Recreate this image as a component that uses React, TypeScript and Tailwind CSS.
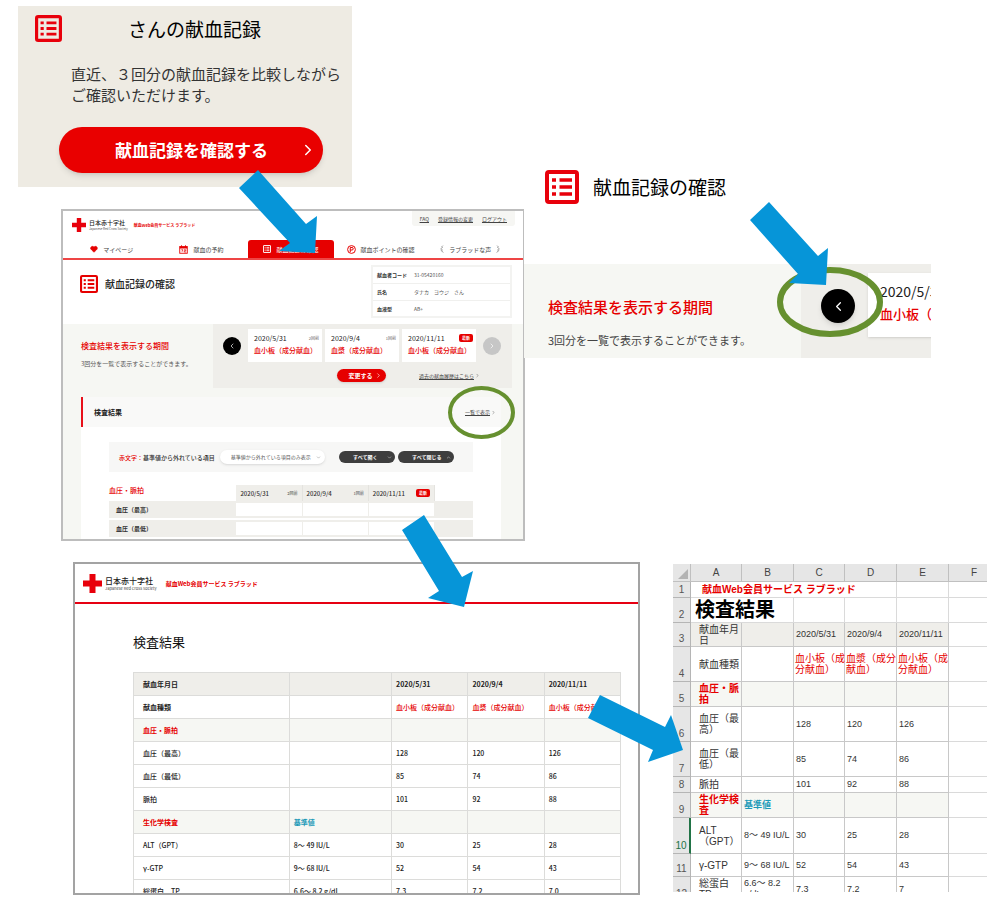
import type { ReactNode } from 'react';
import clsx from 'clsx';
import { ChevronDown, ChevronLeft, ChevronRight, ChevronUp, Heart } from 'lucide-react';

const donations = [
  { date: '2020/5/31', type: '血小板（成分献血）', label: '2回前' },
  { date: '2020/9/4', type: '血漿（成分献血）', label: '1回前' },
  { date: '2020/11/11', type: '血小板（成分献血）', label: '最新' },
];

const donor = [
  ['献血者コード', '31-05420160'],
  ['氏名', 'タナカ　ヨウジ　さん'],
  ['血液型', 'AB+'],
];

type ResultRow = { kind?: 'head' | 'type' | 'group'; cells: string[] };

const results: ResultRow[] = [
  { kind: 'head', cells: ['献血年月日', '', '2020/5/31', '2020/9/4', '2020/11/11'] },
  { kind: 'type', cells: ['献血種類', '', '血小板（成分献血）', '血漿（成分献血）', '血小板（成分献血）'] },
  { kind: 'group', cells: ['血圧・脈拍', '', '', '', ''] },
  { cells: ['血圧（最高）', '', '128', '120', '126'] },
  { cells: ['血圧（最低）', '', '85', '74', '86'] },
  { cells: ['脈拍', '', '101', '92', '88'] },
  { kind: 'group', cells: ['生化学検査', '基準値', '', '', ''] },
  { cells: ['ALT（GPT）', '8～ 49 IU/L', '30', '25', '28'] },
  { cells: ['γ-GTP', '9～ 68 IU/L', '52', '54', '43'] },
  { cells: ['総蛋白　TP', '6.6～ 8.2 g/dL', '7.3', '7.2', '7.0'] },
];

type SheetRow = { no: number; height: string; kind?: 'head' | 'type' | 'group'; cells: string[] };

const sheetRows: SheetRow[] = [
  { no: 3, height: 'h-[24px]', kind: 'head', cells: ['献血年月\n日', '', '2020/5/31', '2020/9/4', '2020/11/11'] },
  { no: 4, height: 'h-[35px]', kind: 'type', cells: ['献血種類', '', '血小板（成\n分献血）', '血漿（成分\n献血）', '血小板（成\n分献血）'] },
  { no: 5, height: 'h-[25px]', kind: 'group', cells: ['血圧・脈\n拍', '', '', '', ''] },
  { no: 6, height: 'h-[35px]', cells: ['血圧（最\n高）', '', '128', '120', '126'] },
  { no: 7, height: 'h-[35px]', cells: ['血圧（最\n低）', '', '85', '74', '86'] },
  { no: 8, height: 'h-[16px]', cells: ['脈拍', '', '101', '92', '88'] },
  { no: 9, height: 'h-[25px]', kind: 'group', cells: ['生化学検\n査', '基準値', '', '', ''] },
  { no: 10, height: 'h-[36px]', cells: ['ALT\n（GPT）', '8～ 49 IU/L', '30', '25', '28'] },
  { no: 11, height: 'h-[23px]', cells: ['γ-GTP', '9～ 68 IU/L', '52', '54', '43'] },
  { no: 12, height: 'h-[25px]', cells: ['総蛋白\nTP', '6.6～ 8.2\ng/dL', '7.3', '7.2', '7'] },
];

function ListIcon({ className }: { className?: string }) {
  return (
    <svg viewBox="0 0 34 34" fill="none" className={clsx('shrink-0', className)} aria-hidden="true">
      <rect x="2" y="2" width="30" height="30" rx="2" stroke="currentColor" strokeWidth="4" />
      <path d="M7 10h4M7 17h4M7 24h4M14.5 10H27M14.5 17H27M14.5 24H27" stroke="currentColor" strokeWidth="3.6" />
    </svg>
  );
}

function RedCross({ className }: { className?: string }) {
  return (
    <svg viewBox="0 0 19 19" className={className} aria-hidden="true">
      <path d="M6.5 0h6v6.5H19v6h-6.5V19h-6v-6.5H0v-6h6.5z" fill="#e8000b" />
    </svg>
  );
}

function CalendarIcon() {
  return (
    <svg viewBox="0 0 18 18" className="size-[9px]" fill="none" stroke="#e60000" aria-hidden="true">
      <rect x="1.5" y="3" width="15" height="13.5" strokeWidth="1.8" />
      <path d="M1.5 5.5h15" strokeWidth="3" />
      <path d="M5 .5v4M13 .5v4" strokeWidth="1.8" />
      <path d="M4.5 9.5h3.5l-2 4M10 9.5h3.5v2h-3v2.500h3.500" strokeWidth="1.4" />
    </svg>
  );
}

function PointIcon() {
  return (
    <svg viewBox="0 0 18 18" className="size-[9px]" fill="none" stroke="#e60000" aria-hidden="true">
      <circle cx="9" cy="9" r="7.8" strokeWidth="2" />
      <path d="M6.500 14V5h3.500a2.400 2.400 0 0 1 0 5H6.500" strokeWidth="2" />
    </svg>
  );
}

function Laurel({ flip }: { flip?: boolean }) {
  return (
    <svg viewBox="0 0 8 16" className={clsx('h-[8px] w-[4px]', flip && '-scale-x-100')} fill="none" stroke="#888" strokeWidth="1.3" aria-hidden="true">
      <path d="M6 1 3 4l3 1M4 5 1.500 8l3.500 1M2 9l1 3 3 0M3 12l4 3" />
    </svg>
  );
}

function PageCard() {
  return (
    <section className="w-fit bg-[#eeebe3] pt-[9px] pr-[11px] pb-[14px] pl-[17px]">
      <div className="flex items-center">
        <ListIcon className="size-[27px] text-[#e8000b]" />
        <h2 className="ml-[66px] text-[19px] leading-[24px] text-black">さんの献血記録</h2>
      </div>
      <p className="mt-[21px] ml-[36px] text-[15px] leading-[21px] whitespace-nowrap text-[#333]">
        直近、３回分の献血記録を比較しながら
        <br />
        ご確認いただけます。
      </p>
      <button className="mt-[22px] ml-[24px] flex h-[46px] w-[264px] items-center rounded-full bg-[#e90000] pr-[6px] shadow-md">
        <span className="flex-1 pl-[15px] text-center text-[17px] font-bold text-white">献血記録を確認する</span>
        <ChevronRight className="-ml-[10px] size-[18px] text-white" />
      </button>
    </section>
  );
}

function CircleButton({ children, className, label }: { children: ReactNode; className: string; label: string }) {
  return (
    <button aria-label={label} className={clsx('flex shrink-0 items-center justify-center rounded-full text-white', className)}>
      {children}
    </button>
  );
}

function DonationLabel({ label }: { label: string }) {
  return label === '最新' ? (
    <span className="rounded-[2px] bg-[#e60000] px-[3px] text-[4px] leading-[8px] font-bold whitespace-nowrap text-white">{label}</span>
  ) : (
    <span className="text-[4px] leading-[8px] whitespace-nowrap text-[#666]">{label}</span>
  );
}

function SiteHeader() {
  const tab = 'flex h-[18px] items-center justify-center gap-[5px] whitespace-nowrap';
  return (
    <header className="border-b-2 border-[#ee4545] bg-white">
      <div className="flex h-[29px] items-start">
        <div className="flex items-center pt-[7px] pl-[9px]">
          <RedCross className="size-[14px]" />
          <div className="ml-[3px]">
            <p className="text-[6px] leading-[8px] font-medium text-[#222]">日本赤十字社</p>
            <p className="text-[3px] leading-[4px] text-[#555]">Japanese Red Cross Society</p>
          </div>
          <p className="ml-[6px] text-[4px] leading-[6px] font-bold text-[#e60000]">献血Web会員サービス ラブラッド</p>
        </div>
        <div className="mr-[8px] ml-auto flex h-[15px] items-center gap-[9px] rounded-b-[3px] bg-[#f6f6f3] px-[8px] text-[5px] text-[#444] underline">
          <a href="#faq">FAQ</a>
          <a href="#account">登録情報の変更</a>
          <a href="#logout">ログアウト</a>
        </div>
      </div>
      <nav className="mr-[8px] ml-[4px] grid grid-cols-5 text-[6px] text-[#444]">
        <a href="#mypage" className={tab}>
          <Heart className="size-[8px] fill-[#e60000] text-[#e60000]" />
          マイページ
        </a>
        <a href="#reserve" className={tab}>
          <CalendarIcon />
          献血の予約
        </a>
        <a href="#record" className={clsx(tab, 'mx-[2px] rounded-t-[3px] bg-[#e60000] text-white')}>
          <ListIcon className="size-[8px]" />
          献血記録の確認
        </a>
        <a href="#point" className={tab}>
          <PointIcon />
          献血ポイントの確認
        </a>
        <a href="#voice" className={tab}>
          <Laurel />
          ラブラッドな声
          <Laurel flip />
        </a>
      </nav>
    </header>
  );
}

function PeriodPicker() {
  return (
    <div className="mr-[11px] h-[64px] min-w-0 flex-1 bg-[#efeeea] pt-[5px]">
      <div className="flex items-center gap-[7px] pr-[11px] pl-[10px]">
        <CircleButton label="前へ" className="size-[18px] bg-black">
          <ChevronLeft className="size-[8px]" />
        </CircleButton>
        <div className="grid h-[33px] flex-1 grid-cols-3 gap-[3px]">
          {donations.map((d) => (
            <div key={d.date} className="bg-white pt-[3px] pl-[6px]">
              <div className="flex items-center justify-between pr-[3px]">
                <span className="text-[7px] leading-[12px] text-[#222]">{d.date}</span>
                <DonationLabel label={d.label} />
              </div>
              <p className="text-[7px] leading-[12px] font-medium whitespace-nowrap text-[#e60000]">{d.type}</p>
            </div>
          ))}
        </div>
        <CircleButton label="次へ" className="size-[18px] bg-[#c6c6c6]">
          <ChevronRight className="size-[8px]" />
        </CircleButton>
      </div>
      <div className="mt-[7px] flex items-center justify-end gap-[33px] pr-[32px]">
        <button className="flex h-[13px] w-[49px] items-center justify-center rounded-full bg-[#e60000] text-[6px] font-bold text-white shadow-sm">
          <span className="ml-[8px]">変更する</span>
          <ChevronRight className="ml-[3px] size-[7px]" />
        </button>
        <a href="#history" className="flex items-center gap-[1px] text-[5px] text-[#444] underline">
          過去の献血履歴はこちら
          <ChevronRight className="size-[5px]" />
        </a>
      </div>
    </div>
  );
}

function RecordPage() {
  const pill = 'flex h-[12px] w-[56px] items-center justify-between rounded-full bg-[#3e3e3e] pr-[3px] pl-[14px] text-[5px] font-bold whitespace-nowrap text-white';
  return (
    <section className="h-[332px] overflow-hidden border-2 border-[#bdbdbd] bg-[#f6f7f3]">
      <SiteHeader />
      <div className="flex h-[64px] items-start bg-white pr-[11px] pl-[17px]">
        <ListIcon className="mt-[15px] size-[18px] text-[#e60000]" />
        <h1 className="mt-[16px] ml-[7px] text-[10px] leading-[16px] font-medium text-[#222]">献血記録の確認</h1>
        <table className="mt-[5px] ml-auto w-[141px] border-2 border-[#f3f3f1] text-left text-[5px]">
          <tbody>
            {donor.map(([label, value]) => (
              <tr key={label} className="h-[17px] border-b border-[#f0f0ee]">
                <th className="w-[42px] pl-[4px] font-bold text-[#333]">{label}</th>
                <td className="text-[#555]">{value}</td>
              </tr>
            ))}
          </tbody>
        </table>
      </div>
      <div className="flex">
        <div className="w-[150px] shrink-0 pt-[16px] pl-[18px] whitespace-nowrap">
          <h2 className="text-[8px] leading-[12px] font-medium text-[#e60000]">検査結果を表示する期間</h2>
          <p className="mt-[7px] text-[6px] leading-[9px] text-[#555]">3回分を一覧で表示することができます。</p>
        </div>
        <PeriodPicker />
      </div>
      <div className="mt-[9px] mr-[22px] ml-[18px]">
        <div className="flex h-[30px] items-center justify-between border-l-2 border-[#e8101a] bg-[#f9f9f8] pr-[5px] pl-[11px]">
          <h2 className="text-[7px] font-bold text-[#222]">検査結果</h2>
          <a href="#list" className="flex items-center gap-[1px] text-[5px] text-[#444] underline">
            一覧で表示
            <ChevronRight className="size-[5px]" />
          </a>
        </div>
        <div className="bg-white pt-[15px] pr-[28px] pl-[28px]">
          <div className="flex h-[30px] items-center bg-[#f7f7f6] pl-[10px]">
            <label htmlFor="filter" className="text-[6px] font-medium whitespace-nowrap text-[#333]">
              <span className="text-[#e60000]">赤文字：</span>
              基準値から外れている項目
            </label>
            <div className="relative ml-[5px] shrink-0">
              <select
                id="filter"
                className="block h-[14px] w-[105px] appearance-none rounded-full bg-white pl-[11px] text-[5px] leading-[14px] text-[#555] shadow-sm"
              >
                <option>基準値から外れている項目のみ表示</option>
              </select>
              <ChevronDown className="pointer-events-none absolute top-[5px] right-[4px] size-[5px] text-[#777]" />
            </div>
            <div className="mr-[19px] ml-auto flex gap-[3px]">
              <button className={pill}>
                すべて開く
                <ChevronDown className="size-[5px]" />
              </button>
              <button className={pill}>
                すべて閉じる
                <ChevronUp className="size-[5px]" />
              </button>
            </div>
          </div>
          <table className="mt-[13px] w-full table-fixed border-separate border-spacing-0 text-left">
            <colgroup>
              <col className="w-[35%]" />
              <col />
              <col />
              <col />
              <col className="w-[38px]" />
            </colgroup>
            <thead>
              <tr className="h-[16px] text-[6px] text-[#333]">
                <th className="pb-[6px] text-[7px] leading-[8px] font-medium text-[#e60000]">血圧・脈拍</th>
                {donations.map((d) => (
                  <th key={d.date} className="border-r border-[#e4e3df] bg-[#efeeea] px-[4px] font-medium">
                    <div className="flex items-center justify-between">
                      {d.date}
                      <DonationLabel label={d.label} />
                    </div>
                  </th>
                ))}
                <td></td>
              </tr>
            </thead>
            <tbody>
              {['血圧（最高）', '血圧（最低）'].map((name) => (
                <tr key={name} className="h-[19px]">
                  <th className="border-b-2 border-white bg-[#efeeea] pl-[7px] text-[6px] leading-[8px] font-bold text-[#333]">{name}</th>
                  {donations.map((d) => (
                    <td key={d.date} className="border-b-2 border-white bg-[#efeeea] p-0">
                      <div className="mr-px h-[13px] bg-white"></div>
                    </td>
                  ))}
                  <td className="border-b-2 border-white bg-[#efeeea]"></td>
                </tr>
              ))}
            </tbody>
          </table>
        </div>
      </div>
    </section>
  );
}

function PeriodCloseup() {
  return (
    <section className="relative z-10 mt-[150px] mr-[56px] -ml-px min-w-0 self-start bg-white">
      <div className="flex h-[114px] items-start pt-[20px] pl-[21px]">
        <ListIcon className="size-[34px] text-[#e8000b]" />
        <h2 className="ml-[14px] text-[19px] leading-[34px] whitespace-nowrap text-black">献血記録の確認</h2>
      </div>
      <div className="flex h-[94px] overflow-hidden bg-[#f6f7f3]">
        <div className="w-[277px] shrink-0 pt-[32px] pl-[24px] whitespace-nowrap">
          <h3 className="text-[15px] leading-[22px] font-medium text-[#e60000]">検査結果を表示する期間</h3>
          <p className="mt-[13px] text-[11px] leading-[18px] text-[#444]">3回分を一覧で表示することができます。</p>
        </div>
        <div className="flex min-w-0 flex-1 items-start overflow-hidden bg-[#efeeea] pt-[9px] pl-[20px]">
          <CircleButton label="前の3回" className="mt-[16px] size-[34px] bg-black shadow-md">
            <ChevronLeft className="size-[15px]" />
          </CircleButton>
          <div className="ml-[13px] h-[64px] shrink-0 bg-white pt-[8px] pr-[20px] pl-[12px] whitespace-nowrap shadow-sm">
            <p className="text-[14px] leading-[20px] text-[#222]">2020/5/31</p>
            <p className="mt-[3px] text-[13px] leading-[20px] font-medium text-[#e60000]">血小板（成分献血）</p>
          </div>
        </div>
      </div>
    </section>
  );
}

function ResultPage() {
  return (
    <section className="h-[333px] overflow-hidden border-2 border-[#a3a3a3] bg-white">
      <header className="flex h-[40px] items-center border-b-2 border-[#e60012] pl-[8px]">
        <RedCross className="size-[19px]" />
        <div className="ml-[3px]">
          <p className="text-[8px] leading-[11px] font-medium text-[#222]">日本赤十字社</p>
          <p className="text-[4px] leading-[5px] text-[#444]">Japanese Red Cross Society</p>
        </div>
        <p className="ml-[9px] text-[6px] font-bold text-[#e60000]">献血Web会員サービス ラブラッド</p>
      </header>
      <div className="pt-[28px] pr-[17px] pl-[58px]">
        <h1 className="text-[13px] leading-[20px] text-[#111]">検査結果</h1>
        <table className="mt-[20px] w-full table-fixed border-separate border-spacing-0 border-t border-l border-[#dcdcda] text-left text-[7px] text-[#222]">
          <colgroup>
            <col className="w-[32%]" />
            <col className="w-[21%]" />
            <col />
            <col />
            <col />
          </colgroup>
          <tbody>
            {results.map(({ kind, cells }) => (
              <tr key={cells[0]} className={clsx('h-[23px] font-medium', kind === 'head' && 'bg-[#efeeea]', kind === 'group' && 'bg-[#f6f7f3]')}>
                {cells.map((cell, i) => (
                  <td
                    key={i}
                    className={clsx(
                      'border-r border-b border-[#dcdcda] p-0 leading-[10px] whitespace-nowrap',
                      i === 0 ? 'pl-[9px]' : 'pl-[4px]',
                      (kind === 'head' || kind === 'group' || (kind === 'type' && i === 0)) && 'font-bold',
                      kind === 'type' && i > 1 && 'text-[#e60000]',
                      kind === 'group' && i === 0 && 'text-[#e60000]',
                      kind === 'group' && i === 1 && 'text-[#1b9ab8]',
                    )}
                  >
                    {cell}
                  </td>
                ))}
              </tr>
            ))}
          </tbody>
        </table>
      </div>
    </section>
  );
}

function Sheet() {
  const rowNo = 'border-r border-b border-[#b5b5b5] bg-[#e6e6e6] p-0 text-center align-bottom text-[10px] leading-[14px] font-normal text-[#555]';
  const blank = 'border-r border-b border-[#dadada] p-0';
  return (
    <section className="mt-[2px] h-[328px] overflow-hidden bg-white font-['Liberation_Sans','Noto_Sans_CJK_JP',sans-serif]">
      <table className="w-[327px] table-fixed border-separate border-spacing-0">
        <colgroup>
          <col className="w-[18px]" />
          <col className="w-[51px]" />
          <col className="w-[52px]" />
          <col className="w-[51px]" />
          <col className="w-[52px]" />
          <col className="w-[52px]" />
          <col className="w-[51px]" />
        </colgroup>
        <thead>
          <tr className="h-[18px] bg-[#e6e6e6] text-[10px] leading-[14px] text-[#444]">
            <th className="border-r border-b border-[#c0c0c0] p-0 align-bottom">
              <svg viewBox="0 0 10 10" className="mb-[2px] ml-[5px] size-[10px]" aria-hidden="true">
                <path d="M10 0v10H0z" fill="#b3b3b3" />
              </svg>
            </th>
            {['A', 'B', 'C', 'D', 'E', 'F'].map((c) => (
              <th key={c} className="border-r border-b border-[#c0c0c0] p-0 font-normal">
                {c}
              </th>
            ))}
          </tr>
        </thead>
        <tbody>
          <tr className="h-[16px]">
            <th className={rowNo}>1</th>
            <td colSpan={4} className={clsx(blank, 'pl-[11px] text-[10px] leading-[14px] font-bold text-[#e60000]')}>
              献血Web会員サービス ラブラッド
            </td>
            <td className={blank}></td>
            <td className={blank}></td>
          </tr>
          <tr className="h-[25px]">
            <th className={rowNo}>2</th>
            <td colSpan={2} className={clsx(blank, 'pl-[4px] text-[20px] leading-[24px] font-bold text-black')}>
              検査結果
            </td>
            <td className={blank}></td>
            <td className={blank}></td>
            <td className={blank}></td>
            <td className={blank}></td>
          </tr>
          {sheetRows.map(({ no, height, kind, cells }) => (
            <tr key={no} className={height}>
              <th className={clsx(rowNo, no === 10 && 'border-r-2 border-r-[#217346] bg-[#cfcfcf] text-[#217346]')}>{no}</th>
              {cells.map((cell, i) => (
                <td
                  key={i}
                  className={clsx(
                    'border-r border-b border-[#c8c8c8] p-0 whitespace-pre',
                    kind === 'head' && 'bg-[#efeeea]',
                    kind === 'group' && 'bg-[#f6f7f3] font-bold',
                    i === 0 && 'pl-[8px] text-[10px] leading-[11px]',
                    i > 0 && kind === 'type' ? 'pl-px text-[10px] leading-[11px]' : i > 0 && 'pl-[2px] text-[9px] leading-[11px]',
                    kind === 'type' && i > 1 && 'text-[#e60000]',
                    kind === 'group' && i === 0 && 'text-[#e60000]',
                    kind === 'group' && i === 1 && 'text-[#1b9ab8]',
                    !(kind === 'type' && i > 1) && kind !== 'group' && 'text-[#333]',
                  )}
                >
                  {cell}
                </td>
              ))}
              <td className={blank}></td>
            </tr>
          ))}
        </tbody>
      </table>
    </section>
  );
}

// arrows and rings that tie the four screens together
function FlowMarks() {
  return (
    <svg viewBox="0 0 987 915" className="pointer-events-none absolute top-0 left-0 z-20 w-full" aria-hidden="true">
      <g fill="none" stroke="#66902f">
        <ellipse cx="830" cy="302" rx="50" ry="32" strokeWidth="6" />
        <ellipse cx="481.5" cy="412.5" rx="31.5" ry="24.5" strokeWidth="4" />
      </g>
      <g fill="#0695d8">
        <path d="M258 170 306 224 317 216 315 253 279 251 290 243 239 188z" />
        <path d="M769 202 818 256 828 248 826 285 789 283 798 274 750 220z" />
        <path d="M424 515 462 577 473 571 464 607 428 598 439 591 402 530z" />
        <path d="M600 695 665 727 671 715 683 750 648 762 653 750 588 718z" />
      </g>
    </svg>
  );
}

export default function App() {
  return (
    <main className="relative min-h-screen overflow-hidden bg-white pb-[20px] font-['Noto_Sans_CJK_JP',sans-serif]">
      <div className="grid grid-cols-[minmax(0,525fr)_minmax(0,462fr)]">
        <div className="min-w-0 pt-[6px]">
          <div className="pl-[18px]">
            <PageCard />
          </div>
          <div className="mt-[22px] pl-[61px]">
            <RecordPage />
          </div>
        </div>
        <PeriodCloseup />
      </div>
      <div className="mt-[21px] grid grid-cols-[minmax(0,567fr)_minmax(0,314fr)] items-start gap-[33px] pl-[73px]">
        <ResultPage />
        <Sheet />
      </div>
      <FlowMarks />
    </main>
  );
}
